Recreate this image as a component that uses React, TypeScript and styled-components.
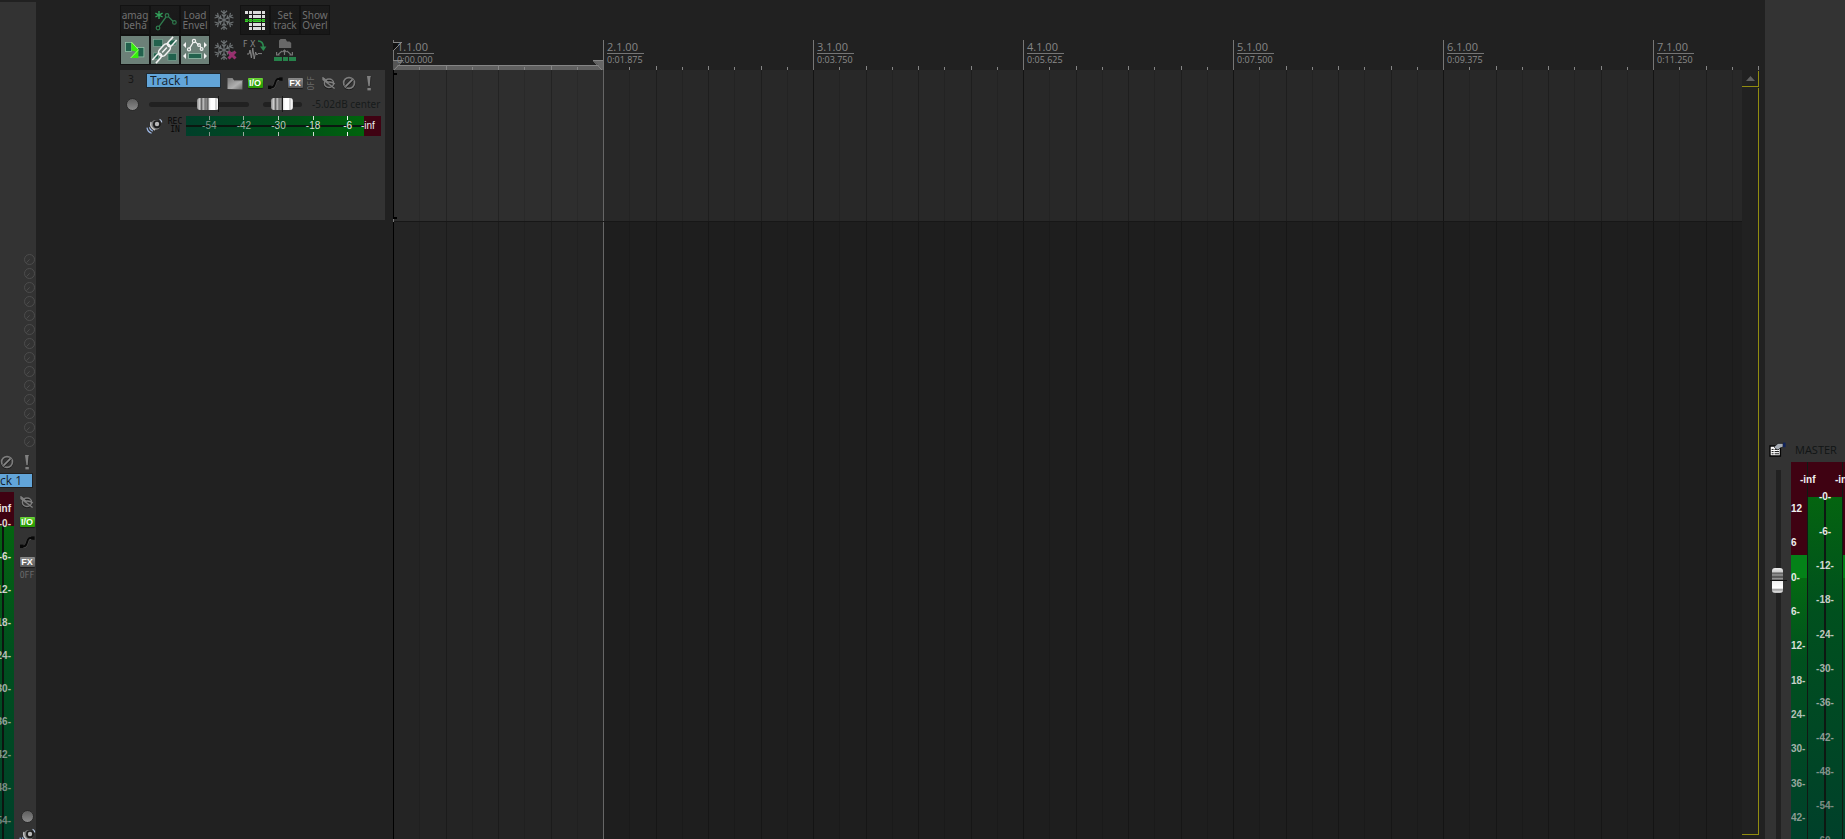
import React from "react";
import styled, { createGlobalStyle, css } from "styled-components";

const GlobalStyle = createGlobalStyle`
  * { box-sizing: border-box; }
  body { margin: 0; background: #212121; font-family: "Open Sans", "Noto Sans", sans-serif; }
  button, input { margin: 0; padding: 0; border: 0; background: none; color: inherit; font: inherit; }
  svg { display: block; }
`;

const labelFont = css`
  font-family: "Liberation Sans", Arial, sans-serif;
  font-size: 10px;
  line-height: 12px;
`;
const tinyFont = css`
  font-family: "DejaVu Sans Mono", monospace;
  font-size: 8px;
  line-height: 8px;
`;

const Window = styled.div`
  display: flex;
  height: 100vh;
  overflow: hidden;
  background: #212121;
`;

/* ---------- shared controls ---------- */

const IconButton = styled.button<{ $w?: number; $h?: number }>`
  display: flex;
  flex: none;
  align-items: center;
  justify-content: center;
  width: ${(p) => p.$w ?? 20}px;
  height: ${(p) => p.$h ?? 20}px;
`;

const Chip = styled.span<{ $on?: boolean }>`
  width: 15px;
  height: 10px;
  border-radius: 1px;
  text-align: center;
  font: bold 9px/10px "Liberation Sans", Arial, sans-serif;
  color: #fff;
  background: ${(p) =>
    p.$on ? "linear-gradient(#6fd63c, #2fa50a 50%, #2b9a08)" : "linear-gradient(#8a8a8a, #565656)"};
  box-shadow: 0 1px 1px #1c1c1c;
`;

const RecordDot = styled.span`
  width: 13px;
  height: 13px;
  border-radius: 50%;
  border: 1px solid #2a2a2a;
  background: linear-gradient(#5e5e5e, #8a8a8a);
`;

const OffTag = styled.span<{ $vertical?: boolean }>`
  ${tinyFont}
  color: #6a6a6a;
  ${(p) => p.$vertical && css`
    writing-mode: vertical-rl;
    transform: rotate(180deg);
  `}
`;

const MuteIcon = () => (
  <svg width="14" height="14" viewBox="0 0 14 14" fill="none">
    <circle cx="7" cy="7.6" r="5.4" stroke="#1e1e1e" strokeWidth="2.2" />
    <circle cx="7" cy="7" r="5.4" stroke="#7d7d7d" strokeWidth="1.7" />
    <path d="M3.4 10.9 10.8 3.6" stroke="#222" strokeWidth="3.2" />
    <path d="M3.4 10.6 10.6 3.4" stroke="#8a8a8a" strokeWidth="1.8" />
  </svg>
);
const BangIcon = () => (
  <svg width="6" height="16" viewBox="0 0 6 16">
    <path d="M1 1h4L4 11H2.4z" fill="#808080" />
    <rect x="1.4" y="13" width="3.4" height="2.4" fill="#808080" />
    <path d="M5 1.6 4.2 11" stroke="#222" strokeWidth=".8" />
  </svg>
);
const PhaseIcon = () => (
  <svg width="14" height="14" viewBox="0 0 14 14" fill="none">
    <ellipse cx="7" cy="8" rx="4.6" ry="4.2" stroke="#1d1d1d" strokeWidth="2" />
    <ellipse cx="7" cy="7.2" rx="4.6" ry="4.2" stroke="#7d7d7d" strokeWidth="1.5" />
    <path d="M1 1v2.6l11.6 8.8M1 1.6l5 4.6M4 6.6c3-1 6.4-.6 8.8 1.4" stroke="#808080" strokeWidth="1.3" />
  </svg>
);
const EnvelopeIcon = () => (
  <svg width="15" height="14" viewBox="0 0 15 14" fill="none">
    <path d="M1 11.6h3.2C7.6 11.6 6.4 3.4 10 3.4h3.4" stroke="#4c4c4c" strokeWidth="3" />
    <path d="M1 11.2h3.2C7.6 11.2 6.4 3 10 3h3.4" stroke="#080808" strokeWidth="2" />
    <rect x="0" y="9.6" width="3.4" height="3.4" fill="#080808" />
    <rect x="11.2" y="1.4" width="3.4" height="3.4" fill="#080808" />
  </svg>
);
const FolderIcon = () => (
  <svg width="16" height="13" viewBox="0 0 16 13">
    <defs>
      <linearGradient id="folder" x1="0" y1="0" x2="1" y2="1">
        <stop offset="0" stopColor="#777" />
        <stop offset=".6" stopColor="#b0b0b0" />
        <stop offset="1" stopColor="#6a6a6a" />
      </linearGradient>
    </defs>
    <path d="M.5 12V1h5l1.2 2H15.4v9.4z" fill="url(#folder)" />
    <path d="M7 3.6h8" stroke="#5a5a5a" strokeWidth=".8" />
  </svg>
);
const SpeakerIcon = () => (
  <svg width="17" height="16" viewBox="0 0 17 16" fill="none">
    <circle cx="9.6" cy="7" r="5" fill="#777" />
    <circle cx="11" cy="6.2" r="4" fill="#1d1d1d" />
    <circle cx="11" cy="6" r="2.2" fill="#b8b8b8" />
    <path d="M5 4c-.8 3 .6 6.4 4 8" stroke="#c4c4c4" strokeWidth="1.4" />
    <path d="M3.4 9.4c.4 2 1.4 3 3.4 3.8M1 9.6c.4 3 2 4.8 4.6 5.6" stroke="#9db8e6" strokeWidth="1.2" />
    <path d="M13.6 1.2c1.2.6 2 1.6 2.2 3.2" stroke="#b6c6e2" strokeWidth="1.2" />
  </svg>
);

/* ---------- mixer strip on the left ---------- */

const MixerStrip = styled.section`
  flex: none;
  display: flex;
  flex-direction: column;
  width: 36px;
  margin-top: 2px;
  padding-top: 250px;
  background: #333;
  overflow: hidden;
`;
const SendKnobs = styled.div`
  display: flex;
  flex-direction: column;
  align-items: flex-end;
`;
const StripRow = styled.div`
  display: flex;
  flex: none;
  height: 25px;
  padding-top: 4px;
  gap: 6px;
`;
const StripName = styled.input`
  flex: none;
  width: 33px;
  height: 15px;
  padding-right: 12px;
  border: 1px solid #202020;
  border-left: 0;
  background: #62a5d9;
  color: #14212c;
  font-size: 12px;
  line-height: 13px;
  text-align: right;
`;
const StripBody = styled.div`
  flex: 1;
  display: flex;
  min-height: 0;
  margin-top: 4px;
`;
const StripMeter = styled.div`
  flex: none;
  width: 14px;
  overflow: hidden;
  background: linear-gradient(90deg, transparent 2px, #0c1410 2px, #0c1410 4px, transparent 4px) 0 34px no-repeat,
    linear-gradient(#3f0212 34px, #046410 34px, #00501e 160px, #00402a);
`;
const StripScale = styled.ol`
  ${labelFont}
  list-style: none;
  margin: 0;
  padding: 11px 3px 0 0;
  display: flex;
  flex-direction: column;
  align-items: flex-end;
  font-weight: bold;
  li { flex: none; height: 33px; }
  li:first-child { height: 15px; }
`;
const StripButtons = styled.div`
  flex: 1;
  display: flex;
  flex-direction: column;
  align-items: center;
  padding-left: 4px;
`;
const StripSpacer = styled.div`
  height: 226px;
  flex: none;
`;

const stripMarks = ["inf", "-0-", "-6-", "12-", "18-", "24-", "30-", "36-", "42-", "48-", "54-"];
const fade = ["#e6e6e6", "#dcdccf", "#dcdccf", "#cfd4cc", "#c4cbc2", "#b5bfb6", "#a3b0a6", "#93a39a", "#84978d", "#7c8c84", "#74867e"];

const Knob = () => (
  <svg width="12" height="14" viewBox="0 0 12 14" fill="none">
    <circle cx="5.5" cy="7.5" r="5" stroke="#4c4c4c" />
    <path d="M2.6 10.5 5.6 7.4" stroke="#4c4c4c" />
  </svg>
);

const Mixer = () => (
  <MixerStrip>
    <SendKnobs>{Array.from({ length: 14 }, (_, i) => <Knob key={i} />)}</SendKnobs>
    <StripRow>
      <IconButton $w={14} aria-label="Mute"><MuteIcon /></IconButton>
      <IconButton $w={14} aria-label="Solo"><BangIcon /></IconButton>
    </StripRow>
    <StripName aria-label="Mixer track name" defaultValue="ck 1" />
    <StripBody>
      <StripMeter>
        <StripScale>
          {stripMarks.map((m, i) => <li key={m} style={{ color: fade[i] }}>{m}</li>)}
        </StripScale>
      </StripMeter>
      <StripButtons>
        <IconButton $w={18} aria-label="Phase"><PhaseIcon /></IconButton>
        <IconButton $w={18} aria-label="Routing"><Chip $on>I/O</Chip></IconButton>
        <IconButton $w={18} aria-label="Envelopes"><EnvelopeIcon /></IconButton>
        <IconButton $w={18} aria-label="Effects"><Chip>FX</Chip></IconButton>
        <IconButton $w={18} $h={8} aria-label="Bypass"><OffTag>OFF</OffTag></IconButton>
        <StripSpacer />
        <IconButton $w={18} aria-label="Record arm"><RecordDot /></IconButton>
        <IconButton $w={18} aria-label="Monitor"><SpeakerIcon /></IconButton>
      </StripButtons>
    </StripBody>
  </MixerStrip>
);

/* ---------- toolbar ---------- */

const Arrange = styled.main`
  flex: 1;
  min-width: 0;
  display: grid;
  grid-template-columns: 357px minmax(0, 1fr) 23px;
  grid-template-rows: 70px minmax(0, 1fr);
`;
const Toolbar = styled.div`
  display: grid;
  grid-template-columns: repeat(7, 30px);
  grid-auto-rows: 30px;
  align-content: start;
  padding: 5px 0 0 84px;
`;
const ToolButton = styled.button<{ $face?: "dark" | "on" | "plain" }>`
  display: flex;
  align-items: center;
  justify-content: center;
  overflow: hidden;
  font: 10px/10px "Noto Sans", "Open Sans", sans-serif;
  color: #707070;
  border: 1px solid ${(p) => (p.$face === "plain" ? "transparent" : "#121212")};
  background: ${(p) =>
    p.$face === "on" ? "#6c8078" : p.$face === "plain" ? "transparent" : "linear-gradient(#1b1b1b, #181818)"};
`;
const ToolText = styled.span`
  display: flex;
  flex-direction: column;
  align-items: center;
`;

const NewEnvelope = () => (
  <svg width="28" height="28" viewBox="0 0 28 28" fill="none" stroke="#2f7a4d">
    <path d="M8 5v8M4.4 7.2l7.2 3.8M4.4 11l7.2-3.8" stroke="#34a35c" strokeWidth="1.4" />
    <path d="M8 20.6 15 11M17.4 10.6l4.6 4.6" strokeWidth="1.3" />
    <circle cx="7" cy="22" r="1.8" strokeWidth="1.2" />
    <circle cx="16" cy="9.4" r="1.8" strokeWidth="1.2" />
    <circle cx="23.4" cy="16.4" r="1.8" strokeWidth="1.2" />
  </svg>
);
const Snowflake = ({ crossed }: { crossed?: boolean }) => (
  <svg width="28" height="28" viewBox="0 0 28 28" fill="none" stroke="#6b7072" strokeWidth="1.2">
    {[0, 60, 120, 180, 240, 300].map((a) => (
      <path key={a} transform={`rotate(${a} 13 14)`} d="M13 14V4M10 4.8 13 7.6l3-2.8M10.8 8.4 13 10.6 15.2 8.4" />
    ))}
    {crossed && <path d="m17.5 15.5 7 7m0-7-7 7" stroke="#99306f" strokeWidth="3" />}
  </svg>
);
const RoutingMatrix = () => (
  <svg width="28" height="28" viewBox="0 0 28 28">
    {[0, 1, 2, 3, 4].map((r) =>
      [[4, 3], [8, 3], [12, 8], [21, 3]].map(([x, w], c) =>
        c === 0 && (r === 1 || r === 3 || r === 4) ? null : (
          <rect key={`${r}-${c}`} x={x} y={5 + r * 4} width={w} height="3" fill={r === 2 ? "#35d126" : "#dcdcdc"} />
        ),
      ),
    )}
    <path d="M4 14.5h20" stroke="#2c9a22" />
  </svg>
);
const Crossfade = () => (
  <svg width="28" height="28" viewBox="0 0 28 28">
    <rect x="4.5" y="6.5" width="6" height="9" fill="#22614d" stroke="#8fc0a6" strokeWidth=".8" />
    <rect x="16.5" y="11.5" width="6.4" height="9.4" fill="#22614d" stroke="#8fc0a6" strokeWidth=".8" />
    <path d="M10.4 6 17.4 13.6V22H9.6l5-6.4-4.2-1z" fill="#35ee0c" />
    <path d="M10.4 6 17.4 13.6M9.6 22l7.8-8" stroke="#b8ff8a" strokeWidth=".8" />
  </svg>
);
const LinkItems = () => (
  <svg width="28" height="28" viewBox="0 0 28 28" fill="none">
    <g fill="#22614d" stroke="#84ab9a" strokeWidth=".6">
      <rect x="2.5" y="3.5" width="9" height="7" />
      <rect x="18" y="4" width="7" height="5" />
      <rect x="2.5" y="17" width="5" height="6" />
      <rect x="17" y="17.5" width="8.5" height="7" />
    </g>
    <g transform="rotate(-48 13.5 14)" stroke="#f2f2f2" strokeWidth="1.5">
      <rect x="6.5" y="10.2" width="14" height="7.6" rx="3.8" />
      <path d="M-2 11.6h7c4 0 4 4.8 0 4.8h-7M29 11.6h-7c-4 0-4 4.8 0 4.8h7M10 14h7" />
    </g>
  </svg>
);
const EnvelopeMove = () => (
  <svg width="28" height="28" viewBox="0 0 28 28" fill="none">
    <path d="M8.6 12.4 12 6.6M14 5.4l3.4 3.4M19 10l1 1.6" stroke="#f4f4f4" strokeWidth="1.2" />
    <g stroke="#f4f4f4" strokeWidth="1.2">
      <circle cx="8" cy="13.4" r="1.5" />
      <circle cx="13" cy="5" r="1.6" />
      <circle cx="18" cy="9" r="1.4" />
      <circle cx="20.6" cy="13" r="1.4" />
    </g>
    <path d="M5 6v6L2 9zM23 6v6l3-3zM5 17v6l-3-3zM23 17v6l3-3z" fill="#f4f4f4" />
    <rect x="7.5" y="17.5" width="13" height="5" fill="#22614d" stroke="#84ab9a" />
  </svg>
);
const FxText = styled.text`
  font: 8px "DejaVu Sans", sans-serif;
  fill: #858585;
`;
const RenderFx = () => (
  <svg width="28" height="28" viewBox="0 0 28 28" fill="none">
    <FxText x="2" y="11">F</FxText>
    <FxText x="9" y="11">X</FxText>
    <path d="M17 5c4 0 5.4 2 5.4 6.4" stroke="#2c8a50" strokeWidth="1.6" />
    <path d="M19 10.4h6.4L22.4 15z" fill="#2c8a50" />
    <path d="M6 18h2l1-4 1.4 8 1.4-10 1.4 11 1.4-7 1.2 3 1.2-1.4h4" stroke="#858585" />
  </svg>
);
const ExplodeFolder = () => (
  <svg width="28" height="28" viewBox="0 0 28 28">
    <path d="M8 12V4.6L9.6 3h5L16 5.4h2.6l1.6 1.6v5z" fill="#686868" />
    <path d="M7 18.6 11 15M13.5 19v-5M20 18.6 16 15M5.6 16v3h3M21.4 16v3h-3M11.5 16l2-2 2 2" stroke="#777" strokeWidth="1.2" fill="none" />
    <path d="M3 21h8v4H3zM12 21h5v4h-5zM18 21h7v4h-7z" fill="#26824a" />
  </svg>
);

const TwoLines = ({ a, b }: { a: string; b: string }) => (
  <ToolText><span>{a}</span><span>{b}</span></ToolText>
);

const Toolbox = () => (
  <Toolbar role="toolbar">
    <ToolButton><TwoLines a="amag" b="beha" /></ToolButton>
    <ToolButton aria-label="New envelope"><NewEnvelope /></ToolButton>
    <ToolButton><TwoLines a="Load" b="Envel" /></ToolButton>
    <ToolButton $face="plain" aria-label="Freeze"><Snowflake /></ToolButton>
    <ToolButton aria-label="Routing matrix"><RoutingMatrix /></ToolButton>
    <ToolButton><TwoLines a="Set" b="track" /></ToolButton>
    <ToolButton><TwoLines a="Show" b="Overl" /></ToolButton>
    <ToolButton $face="on" aria-label="Crossfade"><Crossfade /></ToolButton>
    <ToolButton $face="on" aria-label="Group items"><LinkItems /></ToolButton>
    <ToolButton $face="on" aria-label="Move envelopes"><EnvelopeMove /></ToolButton>
    <ToolButton $face="plain" aria-label="Unfreeze"><Snowflake crossed /></ToolButton>
    <ToolButton $face="plain" aria-label="Render effects"><RenderFx /></ToolButton>
    <ToolButton $face="plain" aria-label="Explode folder"><ExplodeFolder /></ToolButton>
  </Toolbar>
);

/* ---------- track panel ---------- */

const TrackList = styled.div`
  padding: 0 8px 0 84px;
`;
const TrackPanel = styled.article`
  height: 150px;
  background: #333;
`;
const TrackTop = styled.div`
  display: flex;
  align-items: center;
  height: 26px;
`;
const TrackNumber = styled.span`
  width: 22px;
  margin: 0 4px 6px 0;
  text-align: center;
  font: 10px/14px "DejaVu Sans", sans-serif;
  color: #171717;
`;
const TrackName = styled.input`
  flex: none;
  width: 75px;
  height: 15px;
  margin: 0 4px 5px 0;
  padding-left: 3px;
  border: 1px solid #1f2930;
  background: #62a5d9;
  color: #14212c;
  font-size: 12px;
  line-height: 13px;
`;
const TrackMiddle = styled.div`
  display: flex;
  align-items: center;
  height: 16px;
`;
const SliderBox = styled.label<{ $w: number; $mark: number }>`
  position: relative;
  flex: none;
  display: flex;
  align-items: center;
  width: ${(p) => p.$w}px;
  height: 16px;
  margin-right: 14px;
  &::after {
    content: "";
    position: absolute;
    left: ${(p) => p.$mark}px;
    top: 0;
    width: 1px;
    height: 16px;
    background: #161616;
  }
`;
const ArmSlot = styled.div`
  flex: none;
  width: 29px;
  padding-left: 2px;
`;
const Slider = styled.input`
  appearance: none;
  width: 100%;
  height: 5px;
  border-radius: 3px;
  background: #212121;
  &::-webkit-slider-thumb {
    appearance: none;
    width: 22px;
    height: 12px;
    border-radius: 3px;
    background: linear-gradient(90deg, #8a8a8a, #d8d8d8 3px, #666 4px, #666 5px, #cfcfcf 6px, #777 8px, #8a8a8a 10px, #444 11px, #ddd 12px, #fff 14px, #fff 18px, #aaa 19px, #fff 20px, #ccc);
  }
`;
const VolumeText = styled.span`
  margin-left: -4px;
  white-space: nowrap;
  font: 10px/14px "Noto Sans", "Open Sans", sans-serif;
  color: #171b1b;
`;
const TrackBottom = styled.div`
  display: flex;
  align-items: center;
  height: 20px;
  margin-top: 4px;
  padding-left: 24px;
`;
const RecInput = styled.button`
  ${tinyFont}
  width: 20px;
  margin: 0 1px;
  color: #080808;
`;
const TrackMeter = styled.div`
  ${labelFont}
  display: flex;
  align-items: center;
  width: 195px;
  height: 20px;
  padding-left: 6px;
  background: linear-gradient(transparent 9px, #0b1710 9px, #0b1710 11px, transparent 11px) 0 0 / 178px 100% no-repeat,
    linear-gradient(90deg, #003f2a, #005018 110px, #00640c 178px, #3f0212 178px);
`;
const MeterScale = styled.div`
  flex: none;
  display: flex;
  width: 173px;
  margin-right: -4px;
`;
const MeterMark = styled.span<{ $tone: string }>`
  flex: 1;
  display: flex;
  flex-direction: column;
  align-items: center;
  height: 20px;
  color: ${(p) => p.$tone};
  &::before, &::after { content: ""; width: 1px; height: 4px; background: currentColor; }
`;
const MeterPeak = styled.span`
  color: #ececec;
`;

const meterMarks: [string, string][] = [
  ["-54", "#84968c"], ["-42", "#9aa89e"], ["-30", "#bcc8be"], ["-18", "#d4dcd4"], ["-6", "#f4f4f4"],
];

const Track = () => (
  <TrackPanel>
    <TrackTop>
      <TrackNumber>3</TrackNumber>
      <TrackName aria-label="Track name" defaultValue="Track 1" />
      <IconButton aria-label="Folder"><FolderIcon /></IconButton>
      <IconButton aria-label="Routing"><Chip $on>I/O</Chip></IconButton>
      <IconButton aria-label="Envelopes"><EnvelopeIcon /></IconButton>
      <IconButton aria-label="Effects"><Chip>FX</Chip></IconButton>
      <IconButton $w={14} aria-label="Bypass"><OffTag $vertical>OFF</OffTag></IconButton>
      <IconButton aria-label="Phase"><PhaseIcon /></IconButton>
      <IconButton aria-label="Mute"><MuteIcon /></IconButton>
      <IconButton aria-label="Solo"><BangIcon /></IconButton>
    </TrackTop>
    <TrackMiddle>
      <ArmSlot><IconButton $h={16} aria-label="Record arm"><RecordDot /></IconButton></ArmSlot>
      <SliderBox $w={100} $mark={69}><Slider type="range" aria-label="Volume" defaultValue={62} /></SliderBox>
      <SliderBox $w={39} $mark={19}><Slider type="range" aria-label="Pan" defaultValue={48} /></SliderBox>
      <VolumeText>-5.02dB center</VolumeText>
    </TrackMiddle>
    <TrackBottom>
      <IconButton aria-label="Monitor"><SpeakerIcon /></IconButton>
      <RecInput>REC<br />IN</RecInput>
      <TrackMeter>
        <MeterScale>
          {meterMarks.map(([m, tone]) => <MeterMark key={m} $tone={tone}>{m}</MeterMark>)}
        </MeterScale>
        <MeterPeak>-inf</MeterPeak>
      </TrackMeter>
    </TrackBottom>
  </TrackPanel>
);

/* ---------- ruler and timeline ---------- */

const Ruler = styled.div`
  grid-column: 2 / 4;
  display: flex;
  align-items: flex-end;
  overflow: hidden;
`;
const RulerMeasure = styled.div`
  position: relative;
  flex: none;
  display: flex;
  flex-direction: column;
  width: 210px;
  height: 30px;
  border-left: 1px solid #767676;
  padding-left: 3px;
`;
const BarLabel = styled.span`
  position: relative;
  z-index: 1;
  width: 37px;
  height: 14px;
  border-bottom: 1px solid #767676;
  font-size: 11px;
  line-height: 14px;
  color: #858585;
`;
const TimeLabel = styled.span`
  position: relative;
  z-index: 1;
  font-size: 9px;
  line-height: 12px;
  color: #8c8c8c;
`;
const Ticks = styled.div<{ $selected: boolean }>`
  position: absolute;
  left: -1px;
  right: 0;
  bottom: 0;
  height: 5px;
  display: flex;
  align-items: flex-end;
  background: ${(p) => (p.$selected ? "linear-gradient(#858585 1px, #606060 1px)" : "none")};
  i { flex: 1; height: 3px; border-left: 1px solid #858585; }
  i:nth-child(odd) { height: 4px; }
  i:first-child { border-color: transparent; }
`;
const Marker = styled.svg<{ $x: number; $y: number }>`
  position: absolute;
  left: ${(p) => p.$x}px;
  top: ${(p) => p.$y}px;
`;

const Lanes = styled.div`
  position: relative;
  display: flex;
  flex-direction: column;
  overflow: hidden;
`;
const Lane = styled.div<{ $track?: boolean }>`
  display: flex;
  flex: ${(p) => (p.$track ? "none" : "1")};
  height: ${(p) => (p.$track ? "152px" : "auto")};
  background: ${(p) => (p.$track ? "#282828" : "#1e1e1e")};
  border-bottom: ${(p) => (p.$track ? "1px solid #171717" : "0")};
`;
const LaneMeasure = styled.div<{ $edge: string; $selected: boolean; $track?: boolean }>`
  flex: none;
  display: flex;
  width: 210px;
  background: ${(p) => (p.$selected ? (p.$track ? "#2e2e2e" : "#242424") : "transparent")};
  i { flex: 1; border-left: 1px solid rgba(0, 0, 0, 0.1); }
  i:nth-child(odd) { border-color: rgba(0, 0, 0, 0.24); }
  i:first-child { border-color: ${(p) => p.$edge}; }
`;

const measures = ["0:00.000", "0:01.875", "0:03.750", "0:05.625", "0:07.500", "0:09.375", "0:11.250"];
const beats = Array.from({ length: 8 }, (_, i) => <i key={i} />);
const edgeColor = (i: number) => (i === 0 ? "#000" : i === 1 ? "#666" : "#141414");

const TimeRuler = () => (
  <Ruler>
    {measures.map((time, i) => (
      <RulerMeasure key={time}>
        <Ticks $selected={i === 0}>{beats}</Ticks>
        {i === 0 && (
          <>
            <Marker $x={-1} $y={2} width="10" height="10" fill="none">
              <path d="M0 0h9L0 9z" fill="#111" />
              <path d="M0 .5h9M9 0 0 9" stroke="#858585" />
            </Marker>
            <Marker $x={-1} $y={20} width="11" height="10" fill="none">
              <path d="M0 0h10L0 10z" fill="#555" />
              <path d="M0 .5h10L1 10" stroke="#858585" />
            </Marker>
            <Marker $x={199} $y={20} width="11" height="10" fill="none">
              <path d="M0 0h10v10z" fill="#666" />
              <path d="M10 .5H0L9 10" stroke="#858585" />
            </Marker>
          </>
        )}
        <BarLabel>{i + 1}.1.00</BarLabel>
        <TimeLabel>{time}</TimeLabel>
      </RulerMeasure>
    ))}
  </Ruler>
);

const Timeline = () => (
  <Lanes>
    <Lane $track>
      {measures.map((m, i) => <LaneMeasure key={m} $track $edge={edgeColor(i)} $selected={i === 0}>{beats}</LaneMeasure>)}
    </Lane>
    <Lane>
      {measures.map((m, i) => <LaneMeasure key={m} $edge={edgeColor(i)} $selected={i === 0}>{beats}</LaneMeasure>)}
    </Lane>
    <Marker $x={0} $y={3} width="4" height="149">
      <path d="M0 0h4v2H0zM0 144h4v2H0z" fill="#000" />
      <path d="M0 146h1v3H0z" fill="#777" />
    </Marker>
  </Lanes>
);

const ScrollColumn = styled.div`
  display: flex;
  flex-direction: column;
  gap: 1px;
  padding: 1px 6px 4px 0;
`;
const ScrollUp = styled.button`
  flex: none;
  display: flex;
  align-items: center;
  justify-content: center;
  height: 16px;
  border: solid #918c10;
  border-width: 0 1px 1px 0;
`;
const ScrollTrack = styled.div`
  flex: 1;
  border: solid #918c10;
  border-width: 0 1px 1px 0;
`;

/* ---------- master strip ---------- */

const MasterStrip = styled.section`
  flex: none;
  width: 80px;
  display: flex;
  flex-direction: column;
  padding-top: 437px;
  background: #333;
  overflow: hidden;
`;
const MasterHead = styled.div`
  flex: none;
  display: flex;
  align-items: center;
  gap: 8px;
  height: 25px;
  padding-left: 4px;
  font-size: 11px;
  line-height: 15px;
  color: #111515;
`;
const MasterBody = styled.div`
  flex: 1;
  min-height: 0;
  display: flex;
`;
const FaderBox = styled.label`
  position: relative;
  width: 26px;
  padding: 8px 0 0 7px;
  &::after {
    content: "";
    position: absolute;
    left: 5px;
    top: 118px;
    width: 17px;
    height: 1px;
    background: #111;
  }
`;
const Fader = styled.input`
  appearance: none;
  writing-mode: vertical-lr;
  direction: rtl;
  display: block;
  width: 11px;
  height: 100%;
  background: linear-gradient(90deg, transparent 4px, #212121 4px, #212121 9px, transparent 9px);
  &::-webkit-slider-thumb {
    appearance: none;
    width: 11px;
    height: 25px;
    border-radius: 3px;
    background: linear-gradient(#eee, #ccc 4px, #555 5px, #999 7px, #444 9px, #aaa 11px, #333 12px, #eee 13px, #fff 20px, #888 22px, #ddd 23px, #bbb);
  }
`;
const MasterMeter = styled.div`
  ${labelFont}
  position: relative;
  flex: 1;
  display: grid;
  grid-template-columns: 16px 34px 1fr;
  column-gap: 1px;
  font-weight: bold;
  background: #101a14;
  overflow: hidden;
`;
const ScaleColumn = styled.ol<{ $side?: boolean }>`
  list-style: none;
  margin: 0;
  padding: 0;
  overflow: hidden;
  ${(p) => p.$side
    ? css`
      padding-top: 30px;
      background: linear-gradient(#3f0212 93px, #048218 93px, #048218 116px, #046a12 116px, #00501e 200px, #00402a);
    `
    : css`
      padding-top: 18px;
      background: linear-gradient(90deg, transparent 16px, #0d1812 16px, #0d1812 18px, transparent 18px) 0 35px no-repeat,
        linear-gradient(#3f0212 35px, #046410 35px, #00501e 150px, #00402a);
    `}
`;
const ScaleRows = styled.div<{ $h: number; $center?: boolean }>`
  display: flex;
  flex-direction: column;
  height: ${(p) => p.$h}px;
  li {
    flex: 1;
    display: flex;
    align-items: center;
    justify-content: ${(p) => (p.$center ? "center" : "flex-start")};
  }
`;
const Peaks = styled.div`
  position: absolute;
  top: 12px;
  left: 9px;
  display: flex;
  white-space: nowrap;
  color: #eee;
  span { flex: none; width: 35px; }
`;

const sideMarks = ["12", "6", "0-", "6-", "12-", "18-", "24-", "30-", "36-", "42-"];
const centerMarks = ["-0-", "-6-", "-12-", "-18-", "-24-", "-30-", "-36-", "-42-", "-48-", "-54-", "-60-"];
const sideTone = ["#eee", "#eee", "#e6eae6", "#dde2dd", "#d8ded8", "#c8d0ca", "#b4c0b8", "#a4b2aa", "#97a69e", "#8a9b93"];
const centerTone = ["#eee", "#e4e8e4", "#d4dad4", "#c8d0c8", "#bcc6be", "#a8b4ac", "#9aa8a0", "#8c9c94", "#80928a", "#7a8c84", "#74867e"];

const MasterIcon = () => (
  <svg width="18" height="15" viewBox="0 0 18 15">
    <path d="M1 4h10.4v10H1z" fill="#fff" stroke="#050505" strokeWidth="1.4" />
    <path d="M2.6 7.4h2m1 0h4.4M2.6 9.6h2m1 0h4.4M2.6 11.8h2m1 0h4.4" stroke="#111" />
    <path d="M5 5 9 1.4h5v3.6l-3 1-2 2-2-1z" fill="#a6acb4" stroke="#111" strokeWidth=".6" />
    <path d="M14 .6h2.6v4.6H14z" fill="#10235c" />
  </svg>
);

const Master = () => (
  <MasterStrip>
    <MasterHead><MasterIcon />MASTER</MasterHead>
    <MasterBody>
      <FaderBox><Fader type="range" aria-label="Master volume" max={200} defaultValue={143} /></FaderBox>
      <MasterMeter>
        <ScaleColumn $side>
          <ScaleRows $h={343}>
            {sideMarks.map((m, i) => <li key={i} style={{ color: sideTone[i] }}>{m}</li>)}
          </ScaleRows>
        </ScaleColumn>
        <ScaleColumn>
          <ScaleRows $h={378} $center>
            {centerMarks.map((m, i) => <li key={m} style={{ color: centerTone[i] }}>{m}</li>)}
          </ScaleRows>
        </ScaleColumn>
        <ScaleColumn $side />
        <Peaks><span>-inf</span><span>-inf</span></Peaks>
      </MasterMeter>
    </MasterBody>
  </MasterStrip>
);

export default function App() {
  return (
    <>
      <GlobalStyle />
      <Window>
        <Mixer />
        <Arrange>
          <Toolbox />
          <TimeRuler />
          <TrackList><Track /></TrackList>
          <Timeline />
          <ScrollColumn>
            <ScrollUp aria-label="Scroll up">
              <svg width="9" height="5"><path d="M4.5 0 9 5H0z" fill="#606060" /></svg>
            </ScrollUp>
            <ScrollTrack />
          </ScrollColumn>
        </Arrange>
        <Master />
      </Window>
    </>
  );
}
